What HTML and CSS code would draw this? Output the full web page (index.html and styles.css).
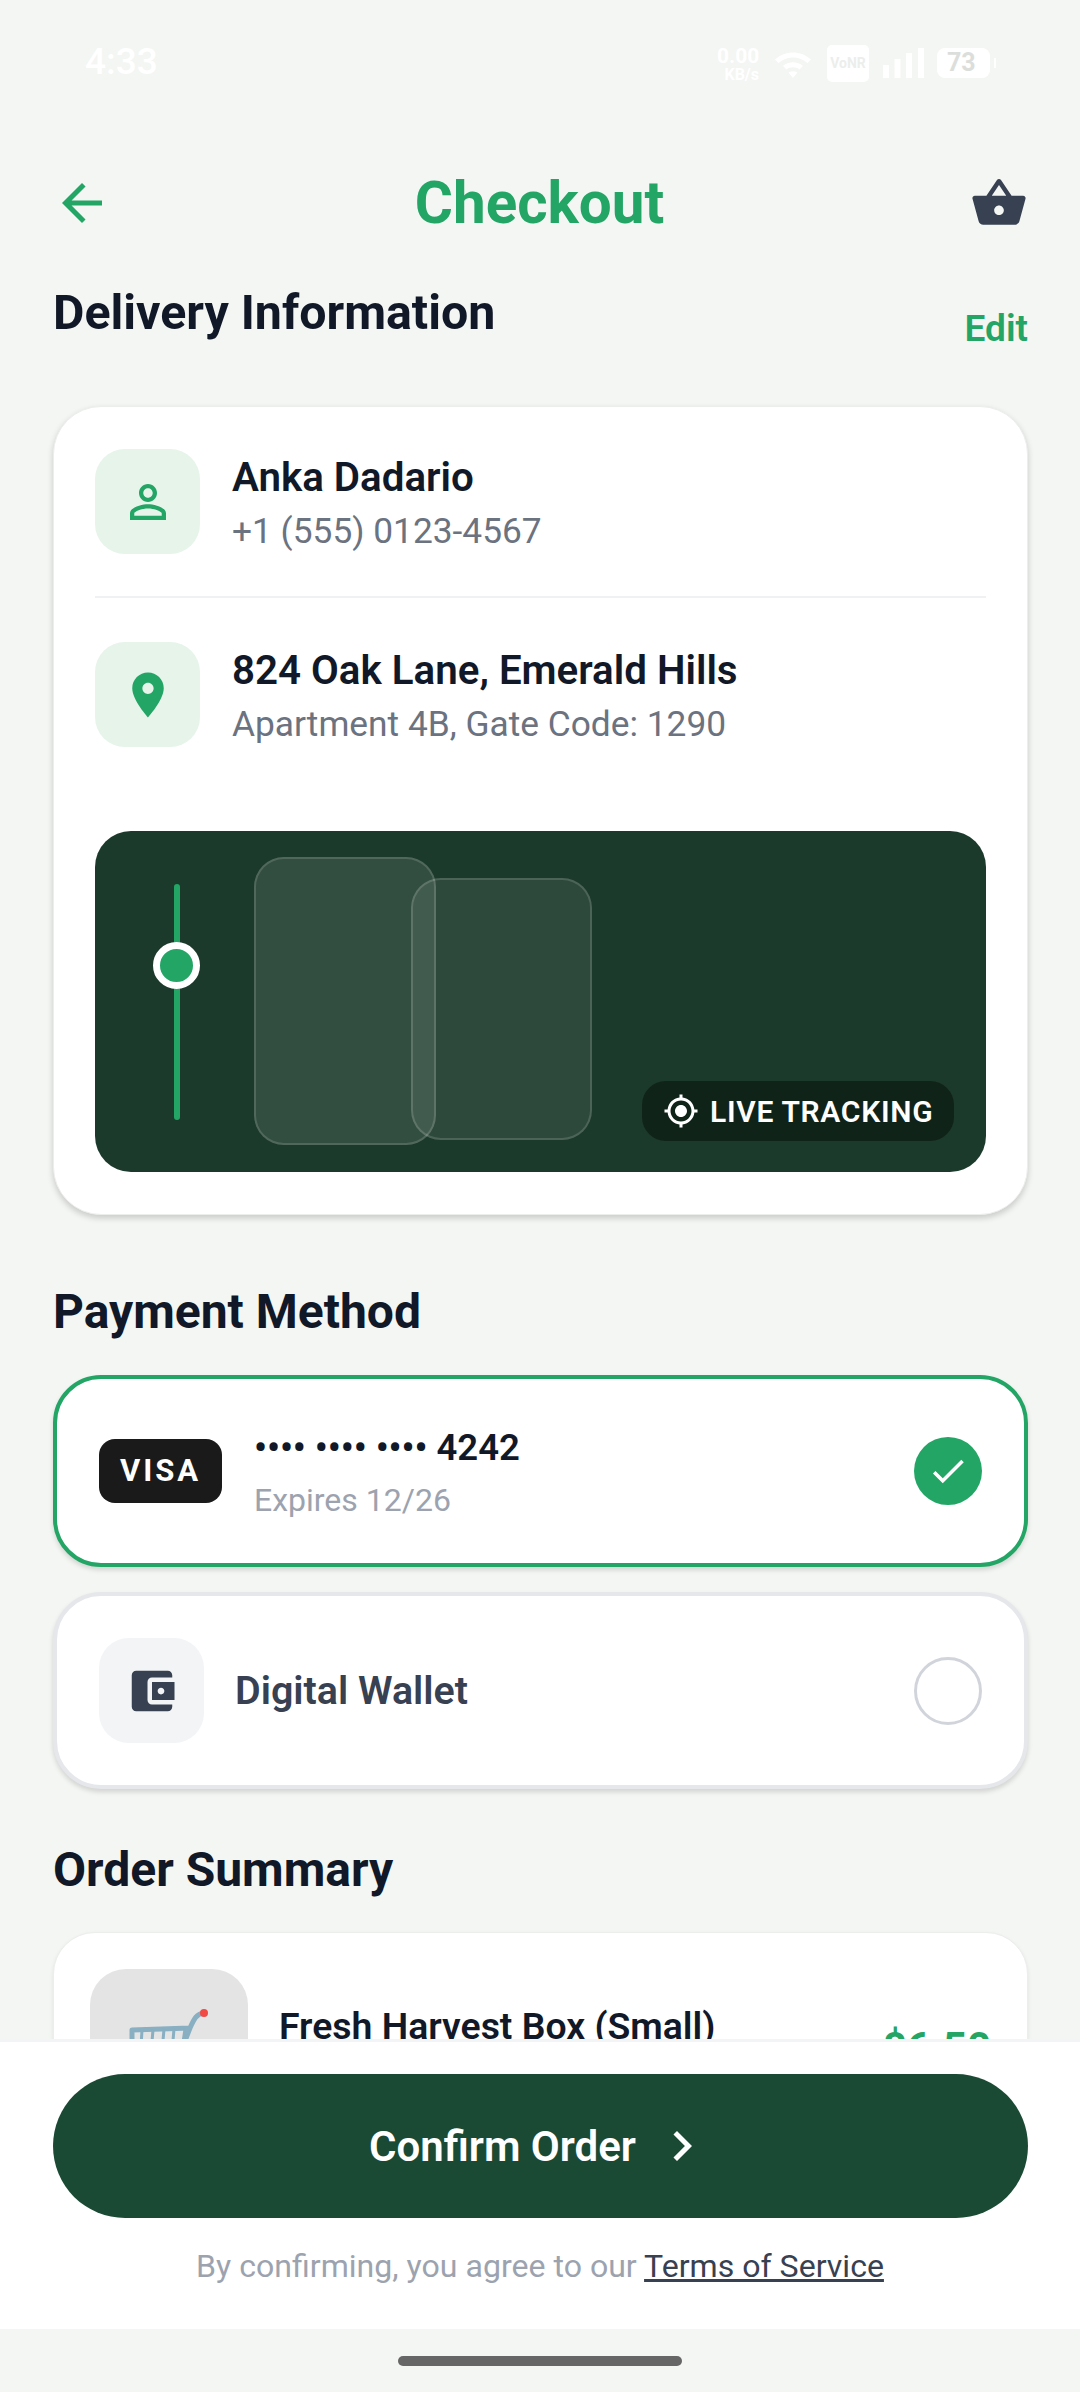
FILE: index.html
```html
<!DOCTYPE html>
<html lang="en">
<head>
<meta charset="utf-8">
<title>Checkout</title>
<link rel="stylesheet" href="styles.css">
</head>
<body>
<div class="screen">
  <div class="status">
    <span class="time">4:33</span>
    <div class="status-icons">
      <div class="speed"><span class="speed-num">0.00</span><span class="speed-unit">KB/s</span></div>
      <svg class="wifi" viewBox="0 0 38 30"><path d="M1 10.500C11 1 27 1 37 10.500L33.500 14C25.500 6.500 12.500 6.500 4.500 14Z"/><path d="M9 17C14.500 12 23.500 12 29 17L25.500 20.500C22 17.500 16 17.500 12.500 20.500Z"/><path d="M14.500 23.500Q19 21 23.500 23.500L19 29Z"/></svg>
      <span class="vonr">VoNR</span>
      <svg class="signal" viewBox="0 0 41 30"><rect x="0" y="17" width="6" height="13"/><rect x="11.500" y="11" width="6" height="19"/><rect x="23" y="5" width="6" height="25"/><rect x="35" y="0" width="6" height="30"/></svg>
      <div class="battery"><span class="battery-num">73</span></div>
      <span class="battery-tip"></span>
    </div>
  </div>

  <header class="topbar">
    <svg class="icon icon-back" viewBox="0 0 24 24"><path d="M20 11H7.830l5.590-5.590L12 4l-8 8 8 8 1.410-1.410L7.830 13H20v-2z"/></svg>
    <h1 class="title">Checkout</h1>
    <svg class="icon icon-basket" viewBox="0 0 24 24"><path d="M17.210 9l-4.380-6.560c-.19-.28-.51-.42-.83-.42-.32 0-.64.14-.83.43L6.790 9H2c-.55 0-1 .45-1 1 0 .09.01.18.04.27l2.540 9.270c.23.84 1 1.460 1.920 1.460h13c.92 0 1.690-.62 1.930-1.460l2.540-9.270L23 10c0-.55-.45-1-1-1h-4.790zM9 9l3-4.400L15 9H9zm3 8c-1.100 0-2-.9-2-2s.9-2 2-2 2 .9 2 2-.9 2-2 2z"/></svg>
  </header>

  <main class="content">
    <div class="section-head">
      <h2 class="heading">Delivery Information</h2>
      <span class="edit">Edit</span>
    </div>

    <section class="card delivery">
      <div class="info-row first">
        <div class="tile tile-green">
          <svg class="icon-54 green" viewBox="0 0 24 24"><path d="M12 5.900c1.160 0 2.100.94 2.100 2.100s-.94 2.100-2.100 2.100S9.900 9.160 9.900 8s.94-2.100 2.100-2.100m0 9c2.970 0 6.100 1.460 6.100 2.100v1.100H5.900V17c0-.64 3.130-2.100 6.100-2.100M12 4C9.790 4 8 5.790 8 8s1.790 4 4 4 4-1.790 4-4-1.790-4-4-4zm0 9c-2.670 0-8 1.340-8 4v3h16v-3c0-2.660-5.330-4-8-4z"/></svg>
        </div>
        <div class="info-text">
          <div class="info-title">Anka Dadario</div>
          <div class="info-sub">+1 (555) 0123-4567</div>
        </div>
      </div>
      <div class="divider"></div>
      <div class="info-row">
        <div class="tile tile-green">
          <svg class="icon-54 green" viewBox="0 0 24 24"><path d="M12 2C8.130 2 5 5.130 5 9c0 5.250 7 13 7 13s7-7.750 7-13c0-3.870-3.130-7-7-7zm0 9.500c-1.380 0-2.500-1.120-2.500-2.500s1.120-2.500 2.500-2.500 2.500 1.120 2.500 2.500-1.120 2.500-2.500 2.500z"/></svg>
        </div>
        <div class="info-text">
          <div class="info-title">824 Oak Lane, Emerald Hills</div>
          <div class="info-sub">Apartment 4B, Gate Code: 1290</div>
        </div>
      </div>
      <div class="map">
        <div class="road"></div>
        <div class="pin"></div>
        <div class="block block-a"></div>
        <div class="block block-b"></div>
        <div class="live">
          <svg class="live-icon" viewBox="0 0 24 24"><path d="M12 8c-2.210 0-4 1.790-4 4s1.790 4 4 4 4-1.790 4-4-1.790-4-4-4zm8.940 3c-.46-4.170-3.770-7.480-7.940-7.940V1h-2v2.060C6.830 3.520 3.520 6.830 3.060 11H1v2h2.060c.46 4.170 3.770 7.480 7.940 7.940V23h2v-2.060c4.170-.46 7.480-3.770 7.940-7.940H23v-2h-2.060zM12 19c-3.870 0-7-3.130-7-7s3.130-7 7-7 7 3.130 7 7-3.130 7-7 7z"/></svg>
          <span>LIVE TRACKING</span>
        </div>
      </div>
    </section>

    <h2 class="heading heading-pay">Payment Method</h2>

    <section class="pay pay-active">
      <div class="visa">VISA</div>
      <div class="pay-text">
        <div class="pay-number">•••• •••• •••• 4242</div>
        <div class="pay-exp">Expires 12/26</div>
      </div>
      <div class="check">
        <svg class="check-icon" viewBox="0 0 24 24"><path d="M9 16.170L4.830 12l-1.420 1.410L9 19 21 7l-1.410-1.410z"/></svg>
      </div>
    </section>

    <section class="pay pay-idle">
      <div class="tile tile-gray">
        <svg class="icon-54 slate" viewBox="0 0 24 24"><path d="M21 18v1c0 1.100-.9 2-2 2H5c-1.110 0-2-.9-2-2V5c0-1.100.89-2 2-2h14c1.100 0 2 .9 2 2v1h-9c-1.110 0-2 .9-2 2v8c0 1.100.89 2 2 2h9zm-9-2h10V8H12v8zm4-2.500c-.83 0-1.500-.67-1.500-1.500s.67-1.500 1.500-1.500 1.500.67 1.500 1.500-.67 1.500-1.500 1.500z"/></svg>
      </div>
      <div class="wallet-label">Digital Wallet</div>
      <div class="radio"></div>
    </section>

    <h2 class="heading heading-order">Order Summary</h2>

    <section class="card order">
      <div class="thumb">
        <svg class="cart" viewBox="0 0 158 158">
          <path class="cart-bar" d="M42 61L100 59M42 61V100M100 59L88 90M114 44C106 45 104 50 100 59"/>
          <path class="cart-grid" d="M42 85H90M52 61L50 95M63 61L60 95M74 60L71 95M84 60L81 95M95 60L92 80"/>
          <circle class="cart-dot" cx="114" cy="44" r="4"/>
        </svg>
      </div>
      <div class="item-text">Fresh Harvest Box (Small)</div>
      <div class="price">$6.50</div>
    </section>
  </main>

  <footer class="footer">
    <button class="confirm">
      <span>Confirm Order</span>
      <svg class="chevron" viewBox="0 0 24 24"><path d="M10 6L8.590 7.410 13.170 12l-4.580 4.590L10 18l6-6z"/></svg>
    </button>
    <p class="terms">By confirming, you agree to our <a class="terms-link">Terms of Service</a></p>
  </footer>

  <div class="navbar"><span class="home"></span></div>
</div>
</body>
</html>
```

FILE: styles.css
```css
* { box-sizing: border-box; }
html, body { margin: 0; padding: 0; }
body { background: #f4f6f3; font-family: Roboto, "Liberation Sans", sans-serif; }
h1, h2, p { margin: 0; }

.screen {
  width: 1080px;
  height: 2392px;
  display: flex;
  flex-direction: column;
  overflow: hidden;
  background: #f4f6f3;
}

/* status bar */
.status {
  height: 153px;
  flex: none;
  display: flex;
  align-items: flex-start;
  justify-content: space-between;
  padding: 42px 84px 0 85px;
  color: #fff;
}
.time { font-size: 37px; line-height: 40px; font-weight: 500; }
.status-icons { display: flex; align-items: flex-start; }
.speed { width: 42px; display: flex; flex-direction: column; align-items: flex-end; margin-right: 15px; margin-top: 4px; }
.speed-num { font-size: 21px; line-height: 21px; font-weight: 700; align-self: flex-start; }
.speed-unit { font-size: 16px; line-height: 15px; font-weight: 700; white-space: nowrap; }
.wifi { width: 38px; height: 30px; margin-top: 7px; fill: #fff; }
.vonr {
  width: 42px; height: 37px; margin-left: 15px; margin-top: 3px;
  background: #fff; border-radius: 5px; color: #eceeec;
  font-size: 14px; line-height: 37px; text-align: center; font-weight: 700;
}
.signal { width: 41px; height: 30px; margin-left: 14px; margin-top: 6px; fill: #fff; }
.battery {
  width: 53px; height: 30px; margin-left: 13px; margin-top: 6px;
  background: #fff; border-radius: 8px; color: #dcdedc;
  font-size: 25px; line-height: 30px; font-weight: 700; padding-left: 10px;
}
.battery-tip { width: 2px; height: 10px; background: #fff; margin-left: 4px; margin-top: 16px; }

/* top bar */
.topbar {
  height: 100px;
  flex: none;
  display: flex;
  align-items: center;
  justify-content: space-between;
  padding: 0 52px 0 52px;
}
.icon { width: 60px; height: 60px; }
.icon-back { fill: #22a565; }
.icon-basket { width: 58px; height: 58px; fill: #374151; }
.title { font-size: 58.4px; line-height: 64px; font-weight: 700; color: #22a565; margin-right: 3px; }

/* scrolling content */
.content {
  flex: 1;
  min-height: 0;
  overflow: hidden;
  padding: 0 52px 0 53px;
}
.section-head { display: flex; justify-content: space-between; align-items: flex-end; height: 153px; }
.heading { font-size: 48px; line-height: 60px; font-weight: 700; color: #111827; }
.section-head .heading { align-self: flex-start; margin-top: 30px; font-size: 48.3px; }
.edit { font-size: 37px; line-height: 44px; font-weight: 600; color: #22a565; margin-bottom: 55px; }

.card {
  background: #fff;
  border: 1px solid #eceeec;
  border-radius: 48px;
  box-shadow: 0 3px 6px rgba(0, 0, 0, .18);
}
.delivery { padding: 42px 41px; }
.info-row { display: flex; align-items: flex-start; gap: 32px; padding-top: 44px; }
.info-row.first { padding-top: 0; padding-bottom: 42px; }
.tile { width: 105px; height: 105px; flex: none; border-radius: 30px; display: flex; align-items: center; justify-content: center; }
.tile-green { background: #e6f4ea; }
.tile-gray { background: #f3f4f6; }
.icon-54 { width: 54px; height: 54px; }
.green { fill: #22a565; }
.slate { fill: #374151; }
.info-text { height: 105px; padding-top: 3px; }
.info-title { font-size: 40.3px; line-height: 52px; font-weight: 600; color: #111827; }
.info-sub { font-size: 35.3px; line-height: 55px; color: #6b7280; }
.divider { height: 2px; background: #f0f1f2; }

.map {
  position: relative;
  height: 341px;
  margin-top: 84px;
  border-radius: 36px;
  background: #1b3a2b;
  overflow: hidden;
}
.road { position: absolute; left: 79px; top: 53px; width: 6px; height: 236px; border-radius: 3px; background: #22a565; }
.pin {
  position: absolute; left: 58px; top: 111px; width: 47px; height: 47px;
  border-radius: 50%; border: 7px solid #fff; background: #22a565;
}
.block { position: absolute; border-radius: 30px; border: 2px solid rgba(255, 255, 255, .15); }
.block-a { left: 159px; top: 26px; width: 182px; height: 288px; background: rgba(255, 255, 255, .1); }
.block-b { left: 316px; top: 47px; width: 181px; height: 262px; background: rgba(255, 255, 255, .08); }
.live {
  position: absolute; left: 547px; top: 250px; width: 312px; height: 60px;
  display: flex; align-items: center; gap: 11px; padding-left: 21px;
  border-radius: 24px; background: #102318;
  color: #fff; font-size: 30px; font-weight: 600; letter-spacing: .7px; white-space: nowrap;
}
.live-icon { width: 36px; height: 36px; fill: #fff; flex: none; }

.heading-pay { margin-top: 67px; }
.pay {
  display: flex;
  align-items: center;
  background: #fff;
  border-radius: 48px;
  border: 4px solid #e5e7eb;
  padding: 42px;
  box-shadow: 0 3px 5px rgba(0, 0, 0, .14);
}
.pay-active { height: 192px; margin-top: 33px; border-color: #22a565; }
.pay-idle { height: 197px; margin-top: 25px; }
.visa {
  width: 123px; height: 64px; flex: none; border-radius: 16px; background: #1a1a1a;
  color: #fff; font-size: 31px; line-height: 64px; font-weight: 700; letter-spacing: 3px; text-align: center;
}
.pay-text { margin-left: 32px; flex: 1; padding-top: 5px; }
.pay-number { font-size: 36.5px; line-height: 50px; font-weight: 600; color: #111827; }
.pay-exp { font-size: 32px; line-height: 50px; color: #9ca3af; margin-top: 2px; }
.check { width: 68px; height: 68px; flex: none; border-radius: 50%; background: #22a565; display: flex; align-items: center; justify-content: center; }
.check-icon { width: 42px; height: 42px; fill: #fff; }
.wallet-label { margin-left: 31px; flex: 1; font-size: 39.4px; font-weight: 600; color: #374151; }
.radio { width: 68px; height: 68px; flex: none; border-radius: 50%; border: 3px solid #d1d5db; }

.heading-order { margin-top: 51px; }
.order {
  margin-top: 32px;
  padding: 36px;
  display: flex;
  align-items: center;
  gap: 31px;
  border-radius: 42px;
  box-shadow: 0 2px 4px rgba(0, 0, 0, .08);
}
.thumb { width: 158px; height: 158px; flex: none; border-radius: 36px; background: #e4e4e4; }
.cart { display: block; width: 158px; height: 158px; }
.cart-bar { fill: none; stroke: #88afc2; stroke-width: 5; stroke-linecap: round; }
.cart-grid { fill: none; stroke: #88afc2; stroke-width: 3; }
.cart-dot { fill: #f14a45; }
.item-text { flex: 1; padding-bottom: 44px; font-size: 37.4px; line-height: 52px; font-weight: 600; color: #111827; }
.price { font-size: 42px; line-height: 52px; font-weight: 700; color: #22a565; }

/* footer */
.footer {
  flex: none;
  height: 290px;
  padding: 32px 53px 0;
  background: #fff;
  border-top: 3px solid #f3f4f6;
}
.confirm {
  width: 975px;
  height: 144px;
  border: 0;
  border-radius: 72px;
  background: #1b4a34;
  color: #fff;
  font-family: inherit;
  font-size: 42px;
  font-weight: 600;
  display: flex;
  align-items: center;
  justify-content: center;
  gap: 16px;
}
.chevron { width: 60px; height: 60px; fill: #fff; }
.terms { margin-top: 26px; text-align: center; font-size: 32.1px; line-height: 44px; color: #9ca3af; }
.terms-link { color: #374151; text-decoration: underline; }

.navbar { flex: none; height: 63px; display: flex; align-items: center; justify-content: center; }
.home { width: 284px; height: 10px; border-radius: 5px; background: #666; }
```
